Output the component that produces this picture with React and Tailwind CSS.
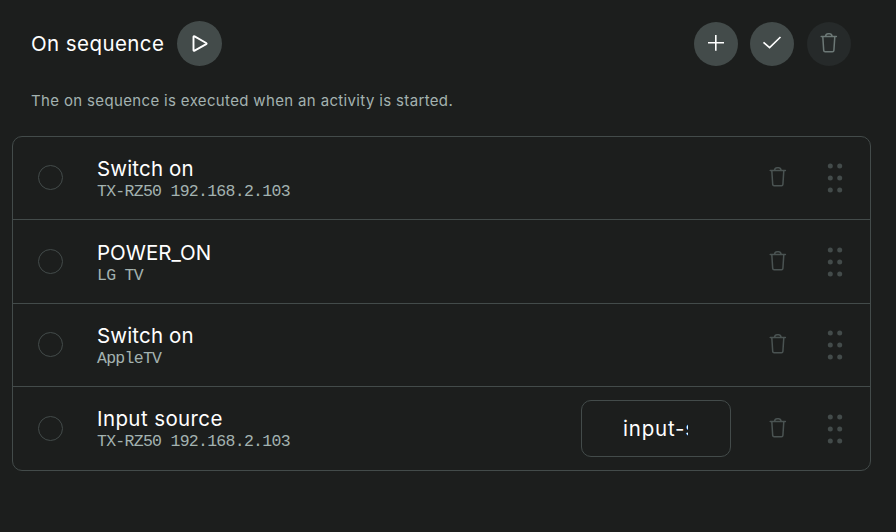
const steps = [
  { title: 'Switch on', device: 'TX-RZ50 192.168.2.103', tracking: 'tracking-[0.16px]', height: 'h-[83px]' },
  { title: 'POWER_ON', device: 'LG TV', tracking: 'tracking-[0px]', height: 'h-[84px]' },
  { title: 'Switch on', device: 'AppleTV', tracking: 'tracking-[0.16px]', height: 'h-[83px]' },
  { title: 'Input source', device: 'TX-RZ50 192.168.2.103', tracking: 'tracking-[0.4px]', height: 'h-[83px]', value: 'input-source' },
];

function Trash({ className }) {
  return (
    <svg className={className} width="20" height="22" viewBox="0 0 20 22" fill="none" stroke="currentColor" strokeWidth="1.5" strokeLinecap="round" strokeLinejoin="round">
      <path d="M2.2 4.6H17.4M3.8 4.6L4.7 18.4Q4.8 19.7 6.1 19.7H13.5Q14.8 19.7 14.9 18.4L15.8 4.6M6.4 4.5Q7 1.8 9 1.8H10.6Q12.6 1.8 13.2 4.5" />
    </svg>
  );
}

function DragHandle() {
  return (
    <svg width="16" height="30" viewBox="0 0 16 30" fill="#434b4a">
      {[3, 15, 27].map((y) => (
        <g key={y}>
          <circle cx="3.3" cy={y} r="2.5" />
          <circle cx="12.7" cy={y} r="2.5" />
        </g>
      ))}
    </svg>
  );
}

function Step({ step, last }) {
  return (
    <div className={`flex items-center pl-[25px] pr-[27px] ${step.height} ${last ? '' : 'border-b border-[#434b4a]'}`}>
      <span className="mb-px size-[25px] shrink-0 rounded-full border border-[#434b4a]" />
      <div className={`ml-[34px] flex-1 whitespace-nowrap ${last ? 'pt-px' : 'pt-[2px]'}`}>
        <div className={`h-[26px] text-[20.5px] leading-[25px] text-white ${step.tracking}`}>{step.title}</div>
        <div className="h-[20px] font-['Liberation_Mono',monospace] text-[16.5px] leading-[20px] tracking-[-0.72px] text-[#a3b2b0]">
          {step.device}
        </div>
      </div>
      {step.value && (
        <div className="mr-[37px] flex h-[57px] w-[150px] items-center rounded-[10px] border border-[#434b4a] pl-[41px] pr-[42px]">
          <span className="overflow-hidden whitespace-nowrap text-[20.5px] leading-[30px] tracking-[0.8px] text-white">{step.value}</span>
        </div>
      )}
      <Trash className="mb-[2px] text-[#4a5352]" />
      <span className="ml-[39px]">
        <DragHandle />
      </span>
    </div>
  );
}

export default function App() {
  return (
    <div className="h-[532px] w-[896px] overflow-hidden bg-[#1c1e1d] font-['Inter',sans-serif]">
      <header className="flex h-[66px] items-end pl-[31px] pr-[45px]">
        <h1 className="mb-[7px] w-[146px] whitespace-nowrap text-[20.5px] leading-[30px] tracking-[0.42px] text-white">On sequence</h1>
        <button className="flex size-[45px] items-center justify-center rounded-full bg-[#434b4a]">
          <svg width="22" height="22" viewBox="0 0 22 22" fill="none" stroke="white" strokeWidth="1.9" strokeLinejoin="round">
            <path d="M4.5 4V17Q4.5 18.2 5.6 17.6L17.2 11.2Q18.1 10.6 17.2 10L5.6 3.4Q4.5 2.8 4.5 4Z" />
          </svg>
        </button>
        <div className="ml-auto flex">
          <button className="flex size-[44px] items-center justify-center rounded-full bg-[#434b4a]">
            <svg width="18" height="18" viewBox="0 0 18 18" fill="none" stroke="white" strokeWidth="1.6">
              <path d="M1 7.8H17M8.8 0V15.8" />
            </svg>
          </button>
          <button className="ml-[12px] flex size-[44px] items-center justify-center rounded-full bg-[#434b4a]">
            <svg width="20" height="16" viewBox="0 0 20 16" fill="none" stroke="white" strokeWidth="1.6">
              <path d="M1.5 6.3L7.6 11.6L18.5 1" />
            </svg>
          </button>
          <button className="ml-[13px] flex size-[44px] items-center justify-center rounded-full bg-[#262a2a]">
            <Trash className="mb-[2px] text-[#6c7876]" />
          </button>
        </div>
      </header>
      <p className="mt-[24px] h-[22px] whitespace-nowrap pl-[31px] text-[15px] leading-[22px] tracking-[0.35px] text-[#a3b2b0]">
        The on sequence is executed when an activity is started.
      </p>
      <section className="ml-[12px] mt-[24px] h-[335px] w-[859px] overflow-hidden rounded-[10px] border border-[#434b4a]">
        {steps.map((step, i) => (
          <Step key={i} step={step} last={i === steps.length - 1} />
        ))}
      </section>
    </div>
  );
}
